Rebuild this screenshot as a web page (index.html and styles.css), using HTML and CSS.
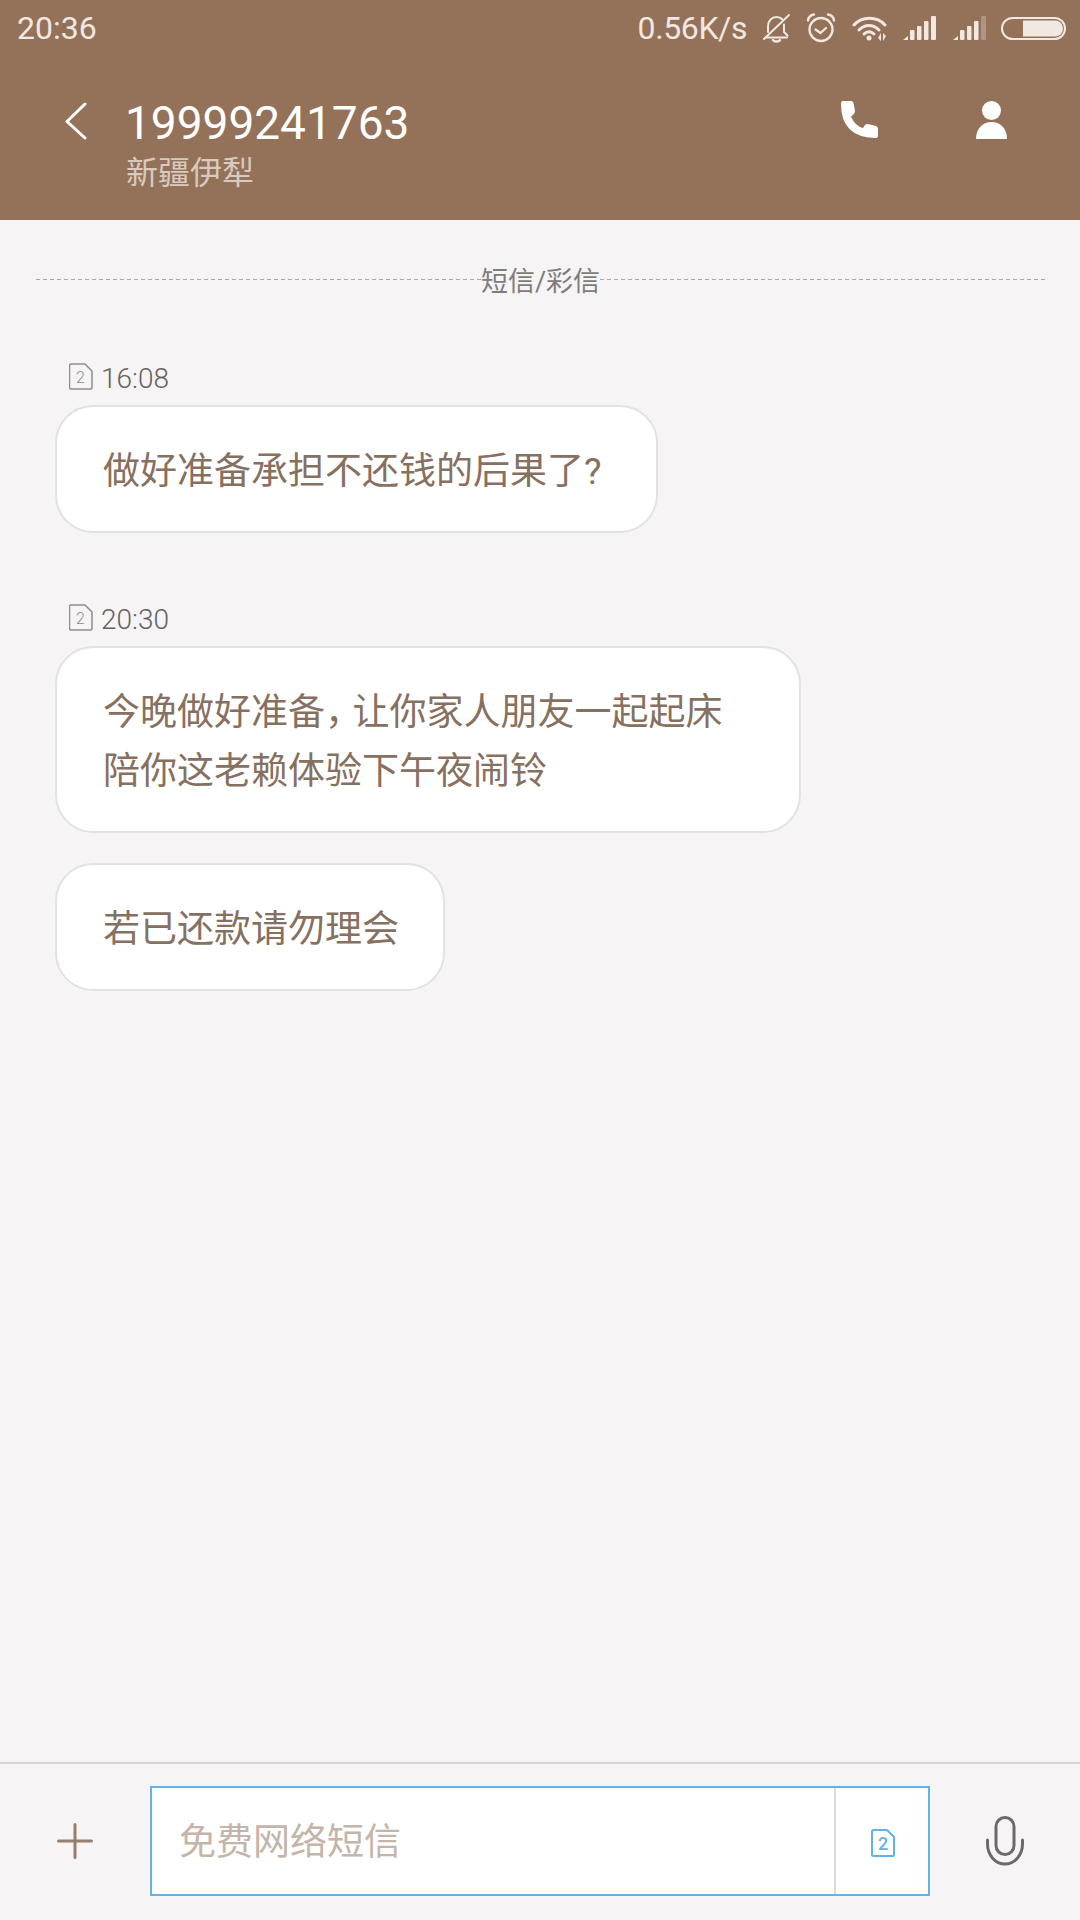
FILE: index.html
```html
<!DOCTYPE html>
<html lang="zh-CN">
<head>
<meta charset="utf-8">
<title>19999241763</title>
<link rel="stylesheet" href="styles.css">
</head>
<body>
<div class="page">
  <header class="header">
    <div class="status">
      <span class="clock">20:36</span>
      <div class="status-right">
        <span class="speed">0.56K/s</span>
        <svg class="ic-bell" viewBox="0 0 27 29" fill="none" stroke="currentColor" stroke-width="2" stroke-linecap="round" stroke-linejoin="round"><path d="M5 18V12C5 6.500 9 3 13.500 3c2.500 0 4.500 1 6 2.500"/><path d="M21 10.500V18l3.500 3.500M2.500 23.500H24"/><path d="M1 25 26 1"/><path d="M10 26c1 2 6 2 7 0" stroke-width="2.500"/></svg>
        <svg class="ic-alarm" viewBox="0 0 30 30" fill="none" stroke="currentColor" stroke-width="2.300" stroke-linecap="round" stroke-linejoin="round"><circle cx="15" cy="16.500" r="11.500"/><path d="M9.500 16.500 14.500 20l5.500-5"/><path d="M2 7.500C2.500 4 5 2 8 1.500M28 7.500C27.500 4 25 2 22 1.500"/></svg>
        <svg class="ic-wifi" viewBox="0 0 36 26" fill="none" stroke="currentColor" stroke-width="3" stroke-linecap="round"><path d="M2 10C10 1 25 1 33 10"/><path d="M7 15c6-6 14-6 20 0"/><path d="M12 19c3-3 7-3 10 0"/><circle cx="17" cy="23" r="2.500" fill="currentColor" stroke="none"/><path d="M29 18v8l-3-3zM31 26v-8l3 3z" fill="currentColor" stroke="none"/></svg>
        <svg class="ic-signal" viewBox="0 0 34 24" fill="currentColor"><path d="M0 24l5-4v4z"/><rect x="7" y="14" width="4.500" height="10" rx="1"/><rect x="14" y="10" width="4.500" height="14" rx="1"/><rect x="21" y="5" width="4.500" height="19" rx="1"/><rect x="28" y="0" width="5" height="24" rx="1"/></svg>
        <svg class="ic-signal" viewBox="0 0 34 24" fill="currentColor"><path d="M0 24l5-4v4z"/><rect x="7" y="14" width="4.500" height="10" rx="1"/><rect x="14" y="10" width="4.500" height="14" rx="1"/><rect x="21" y="5" width="4.500" height="19" rx="1"/><rect x="28" y="0" width="5" height="24" rx="1" opacity=".3"/></svg>
        <svg class="ic-battery" viewBox="0 0 65 23"><rect x="1" y="1" width="63" height="21" rx="10.500" fill="none" stroke="currentColor" stroke-width="2"/><path d="M22 3.500h32a8 8 0 0 1 0 16H22z" fill="currentColor"/></svg>
      </div>
    </div>
    <div class="nav">
      <svg class="ic-back" viewBox="0 0 23 38" fill="none" stroke="currentColor" stroke-width="3" stroke-linecap="round" stroke-linejoin="round"><path d="M21 2 3 19.500 21 36"/></svg>
      <div class="contact">
        <div class="number">19999241763</div>
        <div class="region">新疆伊犁</div>
      </div>
      <div class="nav-actions">
        <svg class="ic-phone" viewBox="0 0 37 37" fill="currentColor"><path d="M2 0H10Q12 0 12.500 2L14 10Q14 12 12 14L10 15.500Q14 25 22 27L24 24Q25.500 22.500 28 23.300L35 25Q37 25.500 37 28V35Q37 37 34 37Q0 36 0 3Q0 0 2 0Z"/></svg>
        <svg class="ic-person" viewBox="0 0 31 38" fill="currentColor"><circle cx="15.500" cy="9.500" r="9.500"/><path d="M0 38C0 27 7 21 15.500 21S31 27 31 38Z"/></svg>
      </div>
    </div>
  </header>

  <main class="thread">
    <div class="channel">
      <span class="channel-line"></span>
      <span class="channel-label">短信/彩信</span>
      <span class="channel-line"></span>
    </div>

    <section class="group">
      <div class="meta">
        <svg class="ic-sim" viewBox="0 0 24 27" fill="none" stroke="currentColor" stroke-width="1.500" stroke-linejoin="round"><path d="M2 1h14l7 7v16.500a1.500 1.500 0 0 1-1.500 1.500H2a1.500 1.500 0 0 1-1.500-1.500V2.500A1.500 1.500 0 0 1 2 1Z"/><text class="sim-digit" x="11.500" y="20" text-anchor="middle" fill="currentColor" stroke="none">2</text></svg>
        <span class="meta-time">16:08</span>
      </div>
      <div class="bubble bubble-first">做好准备承担不还钱的后果了?</div>
    </section>

    <section class="group">
      <div class="meta">
        <svg class="ic-sim" viewBox="0 0 24 27" fill="none" stroke="currentColor" stroke-width="1.500" stroke-linejoin="round"><path d="M2 1h14l7 7v16.500a1.500 1.500 0 0 1-1.500 1.500H2a1.500 1.500 0 0 1-1.500-1.500V2.500A1.500 1.500 0 0 1 2 1Z"/><text class="sim-digit" x="11.500" y="20" text-anchor="middle" fill="currentColor" stroke="none">2</text></svg>
        <span class="meta-time">20:30</span>
      </div>
      <div class="bubble bubble-wide">今晚做好准备<span class="tight">，</span>让你家人朋友一起起床<br>陪你这老赖体验下午夜闹铃</div>
      <div class="bubble bubble-next">若已还款请勿理会</div>
    </section>
  </main>

  <footer class="composer">
    <div class="composer-side">
      <svg class="ic-plus" viewBox="0 0 36 36" stroke="currentColor" stroke-width="3" stroke-linecap="round"><path d="M18 1.500v33M1.500 18h33"/></svg>
    </div>
    <div class="input">
      <div class="placeholder">免费网络短信</div>
      <div class="input-sim">
        <svg class="ic-sim-blue" viewBox="0 0 24 28" fill="none" stroke="currentColor" stroke-width="2" stroke-linejoin="round"><path d="M2.500 1H16l7 7v17.500a1.500 1.500 0 0 1-1.500 1.500h-19A1.500 1.500 0 0 1 1 25.500v-23A1.500 1.500 0 0 1 2.500 1Z"/><text class="sim-digit-blue" x="12" y="21" text-anchor="middle" fill="currentColor" stroke="none">2</text></svg>
      </div>
    </div>
    <div class="composer-side">
      <svg class="ic-mic" viewBox="0 0 38 50" fill="none" stroke="currentColor" stroke-width="3" stroke-linecap="round"><rect x="10" y="1.500" width="18" height="37" rx="9"/><path d="M1.500 24v4a17.500 20 0 0 0 35 0v-4"/></svg>
    </div>
  </footer>
</div>
</body>
</html>
```

FILE: styles.css
```css
* { box-sizing: border-box; }

html, body { margin: 0; padding: 0; }

body {
  font-family: Roboto, "Noto Sans CJK SC", sans-serif;
  background: #f6f4f5;
}

.page {
  width: 1080px;
  height: 1920px;
  display: flex;
  flex-direction: column;
  overflow: hidden;
}

/* Header */
.header {
  height: 220px;
  background: #947259;
  color: #fff;
  flex: none;
}

.status {
  height: 56px;
  display: flex;
  align-items: center;
  justify-content: space-between;
  padding: 0 14px 0 17px;
  color: #f1e8e1;
  font-size: 32px;
}

.status-right {
  display: flex;
  align-items: center;
}

.speed {
  margin-right: 16px;
  letter-spacing: -0.4px;
}

.ic-bell { width: 27px; height: 29px; margin-right: 16px; }
.ic-alarm { width: 30px; height: 30px; margin-right: 16px; }
.ic-wifi { width: 36px; height: 26px; margin-right: 15px; }
.ic-signal { width: 34px; height: 24px; margin-right: 16px; }
.ic-battery { width: 65px; height: 23px; margin-left: -2px; }

.nav {
  display: flex;
  align-items: flex-start;
  padding: 39px 73px 0 64px;
}

.ic-back { width: 23px; height: 38px; margin-top: 7px; flex: none; }

.contact { margin-left: 38px; }

.number {
  font-size: 46px;
  line-height: 56px;
}

.region {
  font-size: 32px;
  line-height: 44px;
  padding-left: 1px;
  color: #d8cabf;
}

.nav-actions {
  margin-left: auto;
  display: flex;
  align-items: flex-start;
  gap: 98px;
  padding-top: 6px;
}

.ic-phone { width: 37px; height: 37px; }
.ic-person { width: 31px; height: 38px; }

/* Thread */
.thread {
  flex: 1;
  padding: 43px 35px 0 36px;
}

.channel {
  display: flex;
  align-items: center;
  height: 34px;
}

.channel-line {
  flex: 1;
  height: 1px;
  background: repeating-linear-gradient(90deg, #a9a5a5 0 4px, transparent 4px 7px);
  margin-top: -2px;
}

.channel-label {
  font-size: 27px;
  line-height: 34px;
  position: relative;
  top: 2px;
  color: #7f7c7c;
}

.group {
  margin-left: 19px;
  margin-top: 65px;
}

.group + .group { margin-top: 70px; }

.meta {
  height: 30px;
  margin-bottom: 13px;
  padding-left: 14px;
  display: flex;
  align-items: center;
  gap: 8px;
  font-size: 28px;
  font-weight: 300;
  line-height: 30px;
  color: #656161;
}

.meta-time { padding-top: 3px; }

.ic-sim { width: 24px; height: 27px; margin-top: -1px; color: #8f8c8c; flex: none; }
.sim-digit { font-family: Roboto, sans-serif; font-size: 16px; }

.bubble {
  width: fit-content;
  padding: 35px 44px 30px 46px;
  background: #fff;
  border: 2px solid #e3e2e2;
  border-radius: 38px;
  font-size: 37px;
  line-height: 59px;
  color: #86705f;
}

.bubble-first { padding-right: 54px; }
.bubble-wide { width: 746px; }
.bubble-next { margin-top: 30px; }

.tight { letter-spacing: -9.5px; }

/* Composer */
.composer {
  flex: none;
  height: 158px;
  display: flex;
  align-items: flex-start;
  padding-top: 22px;
  border-top: 2px solid #d6d5d5;
  background: #f6f4f5;
}

.composer-side {
  width: 150px;
  height: 110px;
  display: flex;
  align-items: center;
  justify-content: center;
  flex: none;
}

.ic-plus { width: 36px; height: 36px; color: #957f6f; }
.ic-mic { width: 38px; height: 50px; color: #6b6a6a; }

.input {
  flex: 1;
  height: 110px;
  display: flex;
  background: #fff;
  border: 2px solid #62b1e8;
}

.placeholder {
  flex: 1;
  padding-left: 27px;
  font-size: 37px;
  line-height: 110px;
  color: #c4b5a8;
}

.input-sim {
  width: 94px;
  border-left: 2px solid #dcdcdc;
  display: flex;
  align-items: center;
  justify-content: center;
}

.ic-sim-blue { width: 24px; height: 28px; color: #5db3ec; margin: 4px 0 0 1px; }
.sim-digit-blue { font-family: Roboto, sans-serif; font-size: 18px; font-weight: 500; }
```
